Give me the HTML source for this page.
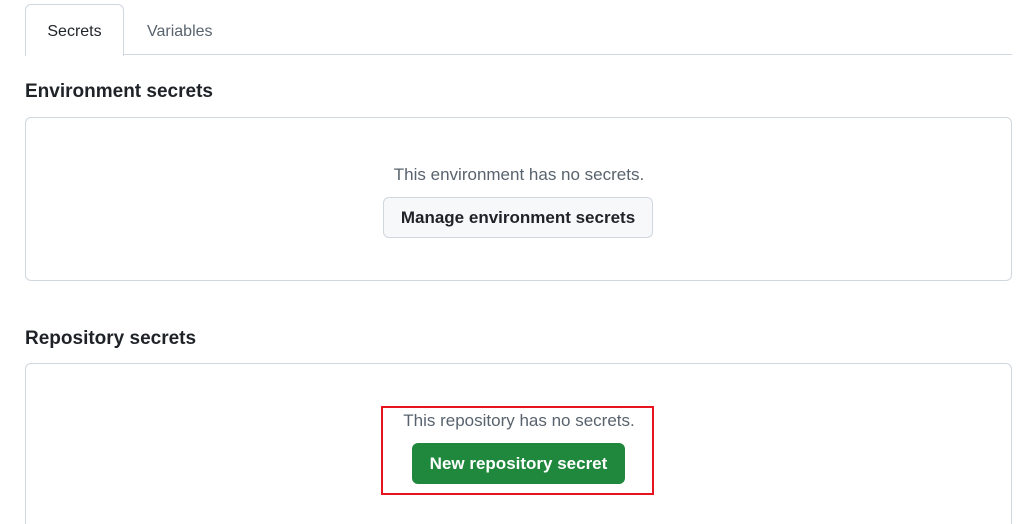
<!DOCTYPE html>
<html><head><style>
html,body{margin:0;width:1024px;height:524px;overflow:hidden}
body{background:#fff;font-family:"Liberation Sans",sans-serif;color:#1f2328;position:relative}
.abs{position:absolute}
.tab{left:25px;top:4px;width:97px;height:51px;border:1px solid #d0d7de;border-bottom:none;border-radius:6px 6px 0 0;background:#fff;font-size:16px;line-height:54px;text-align:center}
.line{left:123px;top:54px;width:889px;height:1px;background:#d0d7de}
h2{position:absolute;margin:0;font-size:19px;font-weight:600;left:25px}
.box{left:25px;width:985px;border:1px solid #d0d7de;border-radius:6px}
.msg{left:0;width:1038px;text-align:center;font-size:17px;color:#59636e}
.btn{border-radius:6px;font-size:17px;font-weight:bold;text-align:center}
</style></head><body>
<div class="abs tab">Secrets</div>
<div class="abs" style="left:147px;top:23px;font-size:16px;color:#59636e">Variables</div>
<div class="abs line"></div>
<h2 style="top:81px">Environment secrets</h2>
<div class="abs box" style="top:117px;height:162px"></div>
<div class="abs msg" style="top:165px">This environment has no secrets.</div>
<div class="abs btn" style="left:383px;top:197px;width:268px;height:39px;line-height:39px;border:1px solid #d0d7de;background:#f6f8fa">Manage environment secrets</div>
<h2 style="top:328px">Repository secrets</h2>
<div class="abs box" style="top:363px;height:170px"></div>
<div class="abs msg" style="top:411px">This repository has no secrets.</div>
<div class="abs btn" style="left:412px;top:443px;width:213px;height:41px;line-height:41px;background:#1f883d;color:#fff">New repository secret</div>
<div class="abs" style="left:381px;top:406px;width:269px;height:85px;border:2px solid #e8131d"></div>
</body></html>
